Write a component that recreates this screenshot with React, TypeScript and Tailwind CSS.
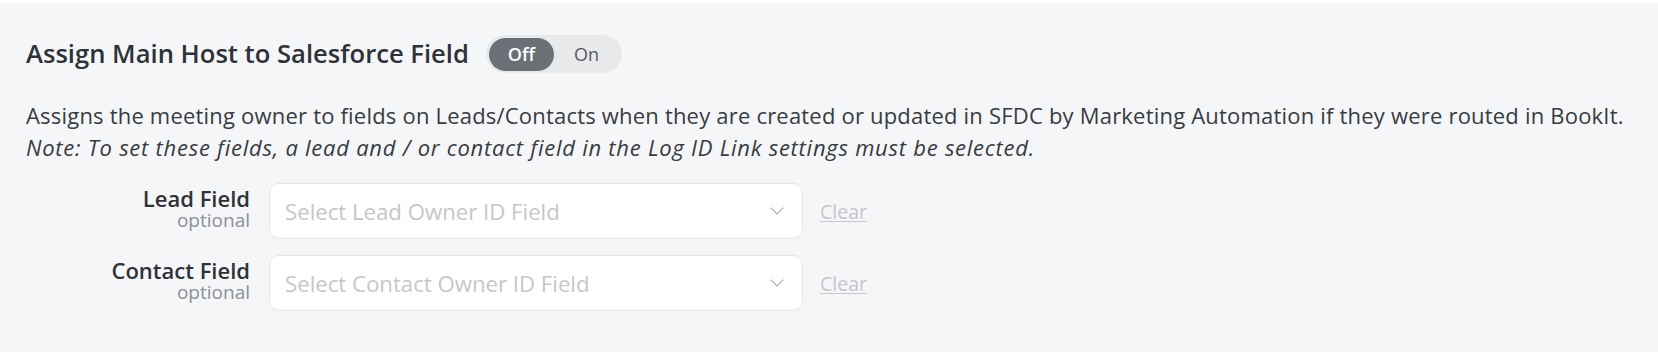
import { useState } from 'react'

const font = { fontFamily: '"Open Sans", "Liberation Sans", sans-serif' }

function Toggle() {
  const [on, setOn] = useState(false)
  return (
    <div className="flex h-[38px] items-center rounded-full bg-[#e8e9eb] p-[3px]">
      <button
        type="button"
        onClick={() => setOn(false)}
        className={`flex h-[33px] w-[65px] items-center justify-center rounded-full text-[18px] ${
          on ? 'text-[#555a60]' : 'bg-[#6a7076] font-semibold text-white'
        }`}
      >
        Off
      </button>
      <button
        type="button"
        onClick={() => setOn(true)}
        className={`flex h-[33px] w-[65px] items-center justify-center rounded-full text-[18px] ${
          on ? 'bg-[#6a7076] font-semibold text-white' : 'text-[#555a60]'
        }`}
      >
        On
      </button>
    </div>
  )
}

function Chevron() {
  return (
    <svg width="14" height="8" viewBox="0 0 14 8" fill="none" aria-hidden="true">
      <path d="M1 1l6 6 6-6" stroke="#b4b7bc" strokeWidth="1.4" strokeLinecap="round" strokeLinejoin="round" />
    </svg>
  )
}

function FieldRow({ label, placeholder }: { label: string; placeholder: string }) {
  return (
    <div className="flex items-center">
      <div className="flex w-[224px] flex-col items-end pb-[6px]">
        <span className="text-[22px] leading-[24px] font-semibold text-[#2f3236]">{label}</span>
        <span className="text-[19px] leading-[20px] text-[#8b9097]">optional</span>
      </div>
      <button
        type="button"
        className="ml-[19px] flex h-[56px] w-[534px] items-center justify-between rounded-[10px] border border-[#e3e5e8] bg-white pr-[18px] pl-[15px] text-left"
      >
        <span className="text-[22.2px] text-[#c4c7cb]">{placeholder}</span>
        <Chevron />
      </button>
      <button type="button" className="ml-[17px] text-[19.5px] text-[#c3c6ca] underline underline-offset-2">
        Clear
      </button>
    </div>
  )
}

export default function App() {
  return (
    <div className="h-[352px] bg-white pt-[3px]" style={font}>
      <div className="h-[349px] bg-[#f5f6f8] px-[26px] pt-[32px]">
        <div className="flex items-center gap-[17px]">
          <h2 className="text-[25.6px] font-semibold text-[#2f3236]">Assign Main Host to Salesforce Field</h2>
          <Toggle />
        </div>

        <div className="mt-[26px] text-[22px] leading-[32px] tracking-[0.2px] text-[#383b40]">
          <p>
            Assigns the meeting owner to fields on Leads/Contacts when they are created or updated in SFDC by
            Marketing Automation if they were routed in BookIt.
          </p>
          <p className="tracking-[0.75px] italic">
            Note: To set these fields, a lead and / or contact field in the Log ID Link settings must be selected.
          </p>
        </div>

        <div className="mt-[20px] flex flex-col gap-[16px]">
          <FieldRow label="Lead Field" placeholder="Select Lead Owner ID Field" />
          <FieldRow label="Contact Field" placeholder="Select Contact Owner ID Field" />
        </div>
      </div>
    </div>
  )
}
